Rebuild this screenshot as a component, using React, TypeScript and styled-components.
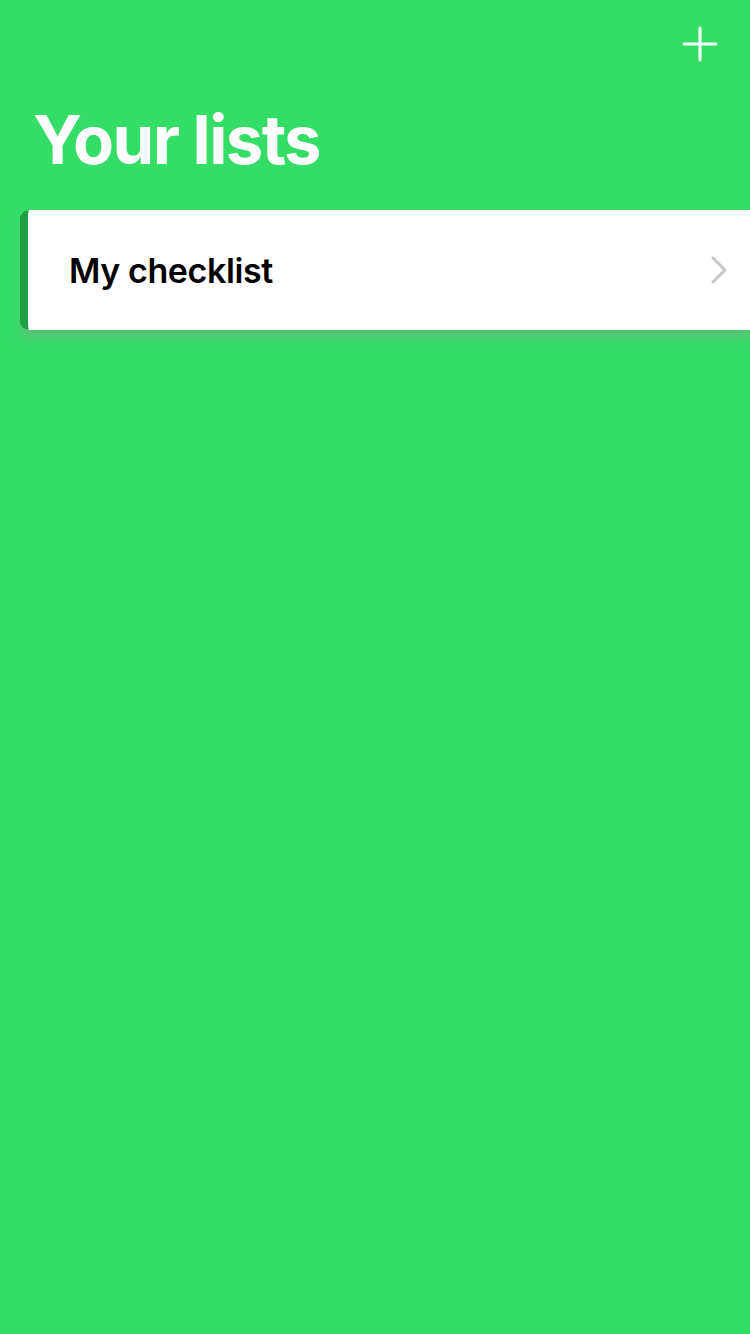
import { createGlobalStyle } from 'styled-components'
import styled from 'styled-components'

const GlobalStyle = createGlobalStyle`
  html, body {
    margin: 0;
    padding: 0;
    background: #34de66;
  }
  body {
    font-family: Inter, "Noto Sans", sans-serif;
    -webkit-font-smoothing: antialiased;
  }
`

const lists = [{ id: 1, name: 'My checklist' }]

const App = () => {
  return (
    <Screen>
      <GlobalStyle />
      <TopBar>
        <AddButton aria-label="Add list">
          <svg width="36" height="36" viewBox="0 0 36 36" fill="none">
            <path d="M18 2v32M2 18h32" stroke="#fff" strokeWidth="3" strokeLinecap="round" />
          </svg>
        </AddButton>
      </TopBar>
      <Title>Your lists</Title>
      <ListStack>
        {lists.map((list) => (
          <ListRow key={list.id}>
            <RowLabel>{list.name}</RowLabel>
            <Chevron width="16" height="28" viewBox="0 0 16 28" fill="none">
              <path d="M2 2l12 12L2 26" stroke="#c7c7cc" strokeWidth="3" strokeLinecap="round" strokeLinejoin="round" />
            </Chevron>
          </ListRow>
        ))}
      </ListStack>
    </Screen>
  )
}

const Screen = styled.div`
  display: flex;
  flex-direction: column;
  min-height: 1334px;
  background: #34de66;
`

const TopBar = styled.div`
  display: flex;
  justify-content: flex-end;
  padding: 26px 32px 0 0;
  height: 70px;
  box-sizing: border-box;
`

const AddButton = styled.div`
  width: 36px;
  height: 36px;
  cursor: pointer;
`

const Title = styled.h1`
  margin: 0;
  padding: 30px 0 0 33px;
  height: 140px;
  box-sizing: border-box;
  font-size: 67px;
  font-weight: 700;
  letter-spacing: -1.6px;
  line-height: 80px;
  color: #fff;
`

const ListStack = styled.div`
  display: flex;
  flex-direction: column;
  padding-left: 20px;
`

const ListRow = styled.div`
  display: flex;
  align-items: center;
  justify-content: space-between;
  height: 120px;
  padding: 0 23px 0 41px;
  background: #fff;
  border-left: 8px solid #1f9f42;
  border-radius: 9px 0 0 9px;
  box-shadow: 0 9px 10px rgba(150, 150, 150, 0.35);
`

const RowLabel = styled.span`
  font-size: 34px;
  font-weight: 600;
  letter-spacing: -0.4px;
  color: #000;
`

const Chevron = styled.svg`
  display: block;
`

export default App
